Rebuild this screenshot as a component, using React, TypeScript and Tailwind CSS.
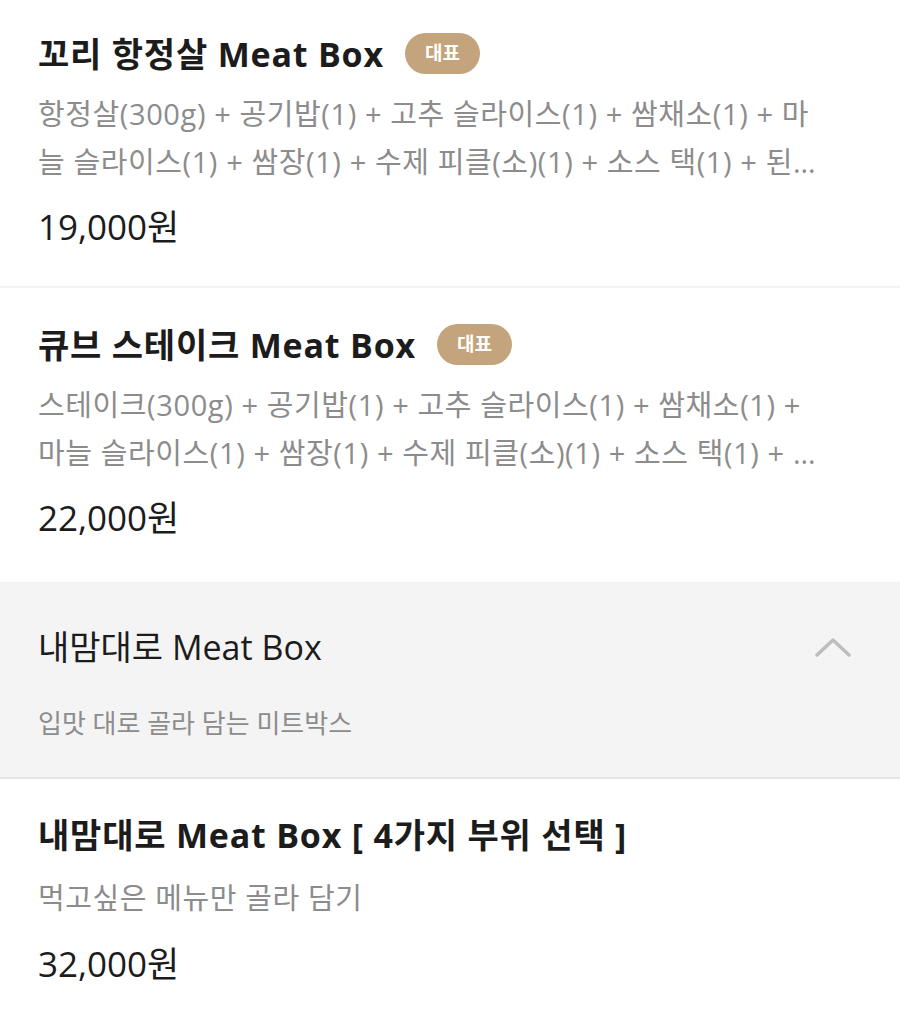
const font = { fontFamily: '"Open Sans", "Noto Sans CJK KR", sans-serif' };

type Item = {
  name: string;
  desc: string;
  price: string;
  badge?: boolean;
  pad: string;
};

const fixed: Item[] = [
  {
    name: '꼬리 항정살 Meat Box',
    desc: '항정살(300g) + 공기밥(1) + 고추 슬라이스(1) + 쌈채소(1) + 마늘 슬라이스(1) + 쌈장(1) + 수제 피클(소)(1) + 소스 택(1) + 된장찌개(1) + 음료(1)',
    price: '19,000원',
    badge: true,
    pad: 'pt-[33px] pb-[39px]',
  },
  {
    name: '큐브 스테이크 Meat Box',
    desc: '스테이크(300g) + 공기밥(1) + 고추 슬라이스(1) + 쌈채소(1) + 마늘 슬라이스(1) + 쌈장(1) + 수제 피클(소)(1) + 소스 택(1) + 된장찌개(1) + 음료(1)',
    price: '22,000원',
    badge: true,
    pad: 'pt-[36px] pb-[44px]',
  },
];

function MenuRow({ item }: { item: Item }) {
  return (
    <div className={`px-[38px] border-b-2 border-[#f4f4f4] ${item.pad}`}>
      <div className="flex items-center gap-[21px]">
        <h3 className="text-[34px] leading-[40px] font-bold text-[#1c1c1c] tracking-[0.8px]">{item.name}</h3>
        {item.badge && (
          <span className="h-[41px] w-[75px] rounded-full bg-[#c4a47c] text-white text-[19px] font-bold flex items-center justify-center">
            대표
          </span>
        )}
      </div>
      <p className="mt-[16px] w-[790px] text-[29px] leading-[48px] tracking-[0.6px] text-[#8c8c8c] break-all line-clamp-2">
        {item.desc}
      </p>
      <div className="mt-[21px] text-[35px] leading-[40px] text-[#1c1c1c]">{item.price}</div>
    </div>
  );
}

export default function App() {
  return (
    <div className="w-[900px] min-h-[1022px] bg-white" style={font}>
      {fixed.map((item, i) => (
        <MenuRow key={i} item={item} />
      ))}

      {/* Category header (expanded) */}
      <div className="bg-[#f4f4f4] border-b-2 border-[#e6e6e6] px-[38px] pt-[43px] pb-[38px]">
        <div className="flex items-center justify-between">
          <h2 className="text-[34px] leading-[40px] text-[#1c1c1c]">내맘대로 Meat Box</h2>
          <svg width="36" height="20" viewBox="0 0 36 20" className="mr-[11px]">
            <path d="M2 18 L18 3 L34 18" fill="none" stroke="#bdbdbd" strokeWidth="3.5" strokeLinecap="round" strokeLinejoin="round" />
          </svg>
        </div>
        <p className="mt-[40px] text-[26px] leading-[32px] text-[#8c8c8c]">입맛 대로 골라 담는 미트박스</p>
      </div>

      <div className="px-[38px] pt-[36px] pb-[39px]">
        <h3 className="text-[34px] leading-[40px] font-bold text-[#1c1c1c] tracking-[0.8px]">
          내맘대로 Meat Box [ 4가지 부위 선택 ]
        </h3>
        <p className="mt-[23px] text-[29px] leading-[40px] tracking-[0.6px] text-[#8c8c8c]">먹고싶은 메뉴만 골라 담기</p>
        <div className="mt-[26px] text-[35px] leading-[40px] text-[#1c1c1c]">32,000원</div>
      </div>
    </div>
  );
}
